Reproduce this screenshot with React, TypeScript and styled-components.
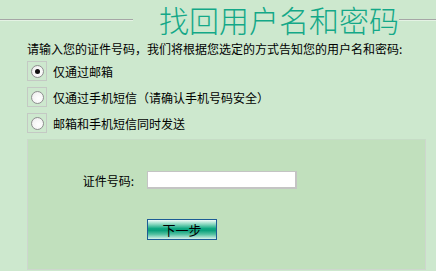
import React from "react";
import styled, { createGlobalStyle } from "styled-components";

const GlobalStyle = createGlobalStyle`
  html, body {
    margin: 0;
    padding: 0;
    background: #cde8ce;
  }
  body {
    width: 436px;
    height: 271px;
    overflow: hidden;
    font-family: "Noto Sans CJK SC", "Noto Sans", sans-serif;
    font-size: 12px;
    color: #000;
  }
`;

const Page = styled.div`
  display: flex;
  flex-direction: column;
  width: 436px;
  height: 271px;
`;

const TitleBar = styled.div`
  display: flex;
  align-items: center;
  height: 38px;
`;

const Rule = styled.div<{ $width?: number }>`
  flex: ${({ $width }) => ($width ? `0 0 ${$width}px` : "1 1 0")};
  min-width: 0;
  height: 0;
  border-top: 1px solid #a6a6a6;
  border-bottom: 1px solid #e4f2e4;
  margin-top: 1px;
`;

const Title = styled.h1`
  flex: none;
  margin: 0 0 0 26px;
  font-size: 30px;
  font-weight: 300;
  line-height: 38px;
  color: #14a888;
  white-space: nowrap;
`;

const Intro = styled.p`
  margin: 4px 0 0 27px;
  line-height: 14px;
`;

const Options = styled.div`
  display: flex;
  flex-direction: column;
  gap: 6px;
  margin: 5px 0 0 27px;
`;

const OptionRow = styled.label`
  display: flex;
  align-items: center;
  gap: 6px;
  height: 20px;
`;

const RadioFrame = styled.span`
  display: flex;
  align-items: center;
  justify-content: center;
  width: 18px;
  height: 18px;
  border: 1px solid #c4c9c4;
`;

const Radio = styled.input`
  appearance: none;
  margin: 0;
  width: 13px;
  height: 13px;
  border-radius: 50%;
  border: 1px solid #8e8f8f;
  background: radial-gradient(circle at 60% 60%, #ffffff 0%, #f4f4f4 60%, #dcdcdc 100%);
  box-sizing: border-box;
  display: flex;
  align-items: center;
  justify-content: center;

  &:checked::after {
    content: "";
    width: 5px;
    height: 5px;
    border-radius: 50%;
    background: #111;
  }
`;

const Panel = styled.div`
  display: flex;
  flex-direction: column;
  margin: 6px 10px 0 27px;
  height: 131px;
  box-sizing: border-box;
  background: #c1e0bd;
  border: 1px solid #ced6ce;
  border-top-color: #c6dcc6;
  padding-top: 31px;
`;

const FieldRow = styled.div`
  display: grid;
  grid-template-columns: 119px 150px;
  align-items: center;
  height: 18px;
`;

const FieldLabel = styled.span`
  justify-self: end;
  padding-right: 13px;
`;

const TextInput = styled.input`
  box-sizing: border-box;
  width: 150px;
  height: 18px;
  margin: 0;
  border: 2px solid #c4c4c4;
  border-width: 1px 2px 2px 1px;
  background: #fff;
  outline: none;
`;

const ButtonRow = styled.div`
  display: flex;
  padding-left: 119px;
  margin-top: 30px;
`;

const NextButton = styled.button`
  box-sizing: border-box;
  width: 70px;
  height: 21px;
  padding: 0;
  border: 1px solid #1d5c95;
  font-family: inherit;
  font-size: 13px;
  line-height: 18px;
  color: #000;
  background: linear-gradient(
    #f4fcf8 0%,
    #8ad8c0 22%,
    #10a882 45%,
    #0aa07c 55%,
    #52c0a0 75%,
    #d6f2e8 100%
  );
  cursor: pointer;
`;

const options = [
  { label: "仅通过邮箱", checked: true },
  { label: "仅通过手机短信（请确认手机号码安全）", checked: false },
  { label: "邮箱和手机短信同时发送", checked: false },
];

export default function App() {
  return (
    <Page>
      <GlobalStyle />
      <TitleBar>
        <Rule $width={133} />
        <Title>找回用户名和密码</Title>
        <Rule />
      </TitleBar>
      <Intro>请输入您的证件号码，我们将根据您选定的方式告知您的用户名和密码:</Intro>
      <Options>
        {options.map((o) => (
          <OptionRow key={o.label}>
            <RadioFrame>
              <Radio type="radio" name="way" defaultChecked={o.checked} />
            </RadioFrame>
            {o.label}
          </OptionRow>
        ))}
      </Options>
      <Panel>
        <FieldRow>
          <FieldLabel>证件号码:</FieldLabel>
          <TextInput type="text" />
        </FieldRow>
        <ButtonRow>
          <NextButton type="button">下一步</NextButton>
        </ButtonRow>
      </Panel>
    </Page>
  );
}
